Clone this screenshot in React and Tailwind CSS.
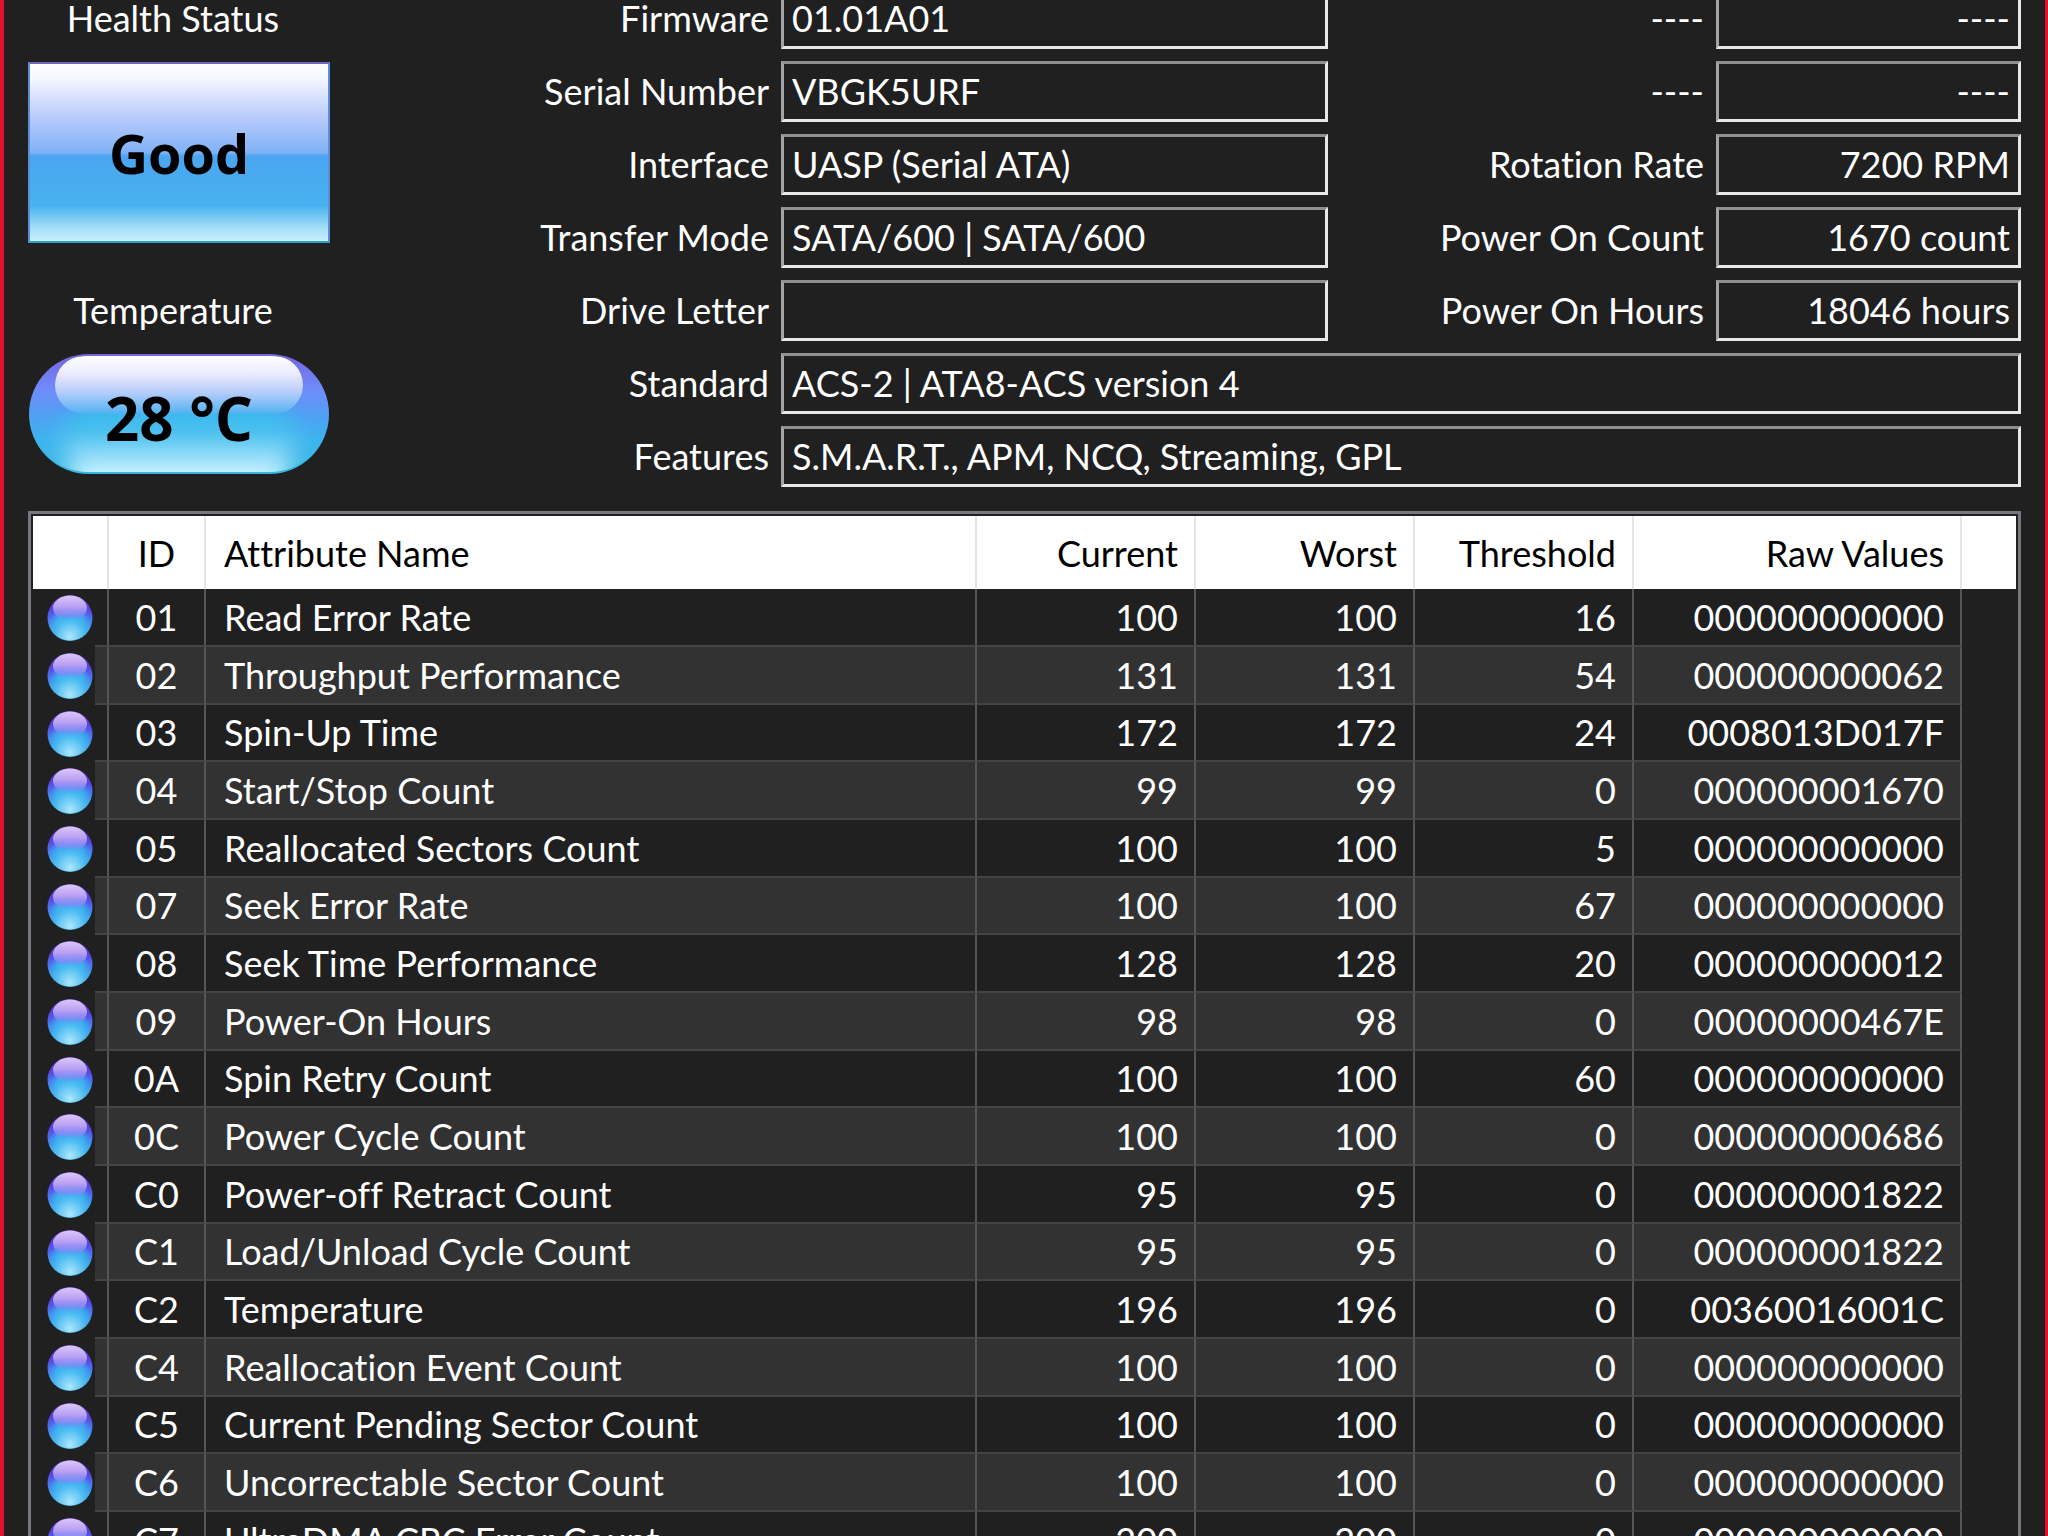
import React from "react";

const driveFields = [
  { id: "firmware", label: "Firmware", value: "01.01A01" },
  { id: "serial", label: "Serial Number", value: "VBGK5URF" },
  { id: "interface", label: "Interface", value: "UASP (Serial ATA)" },
  { id: "transfer", label: "Transfer Mode", value: "SATA/600 | SATA/600" },
  { id: "letter", label: "Drive Letter", value: "" },
];

const usageFields = [
  { id: "reserved-1", label: "----", value: "----" },
  { id: "reserved-2", label: "----", value: "----" },
  { id: "rotation", label: "Rotation Rate", value: "7200 RPM" },
  { id: "power-count", label: "Power On Count", value: "1670 count" },
  { id: "power-hours", label: "Power On Hours", value: "18046 hours" },
];

const wideFields = [
  { id: "standard", label: "Standard", value: "ACS-2 | ATA8-ACS version 4" },
  { id: "features", label: "Features", value: "S.M.A.R.T., APM, NCQ, Streaming, GPL" },
];

const attributes = [
  { id: "01", name: "Read Error Rate", current: 100, worst: 100, threshold: 16, raw: "000000000000" },
  { id: "02", name: "Throughput Performance", current: 131, worst: 131, threshold: 54, raw: "000000000062" },
  { id: "03", name: "Spin-Up Time", current: 172, worst: 172, threshold: 24, raw: "0008013D017F" },
  { id: "04", name: "Start/Stop Count", current: 99, worst: 99, threshold: 0, raw: "000000001670" },
  { id: "05", name: "Reallocated Sectors Count", current: 100, worst: 100, threshold: 5, raw: "000000000000" },
  { id: "07", name: "Seek Error Rate", current: 100, worst: 100, threshold: 67, raw: "000000000000" },
  { id: "08", name: "Seek Time Performance", current: 128, worst: 128, threshold: 20, raw: "000000000012" },
  { id: "09", name: "Power-On Hours", current: 98, worst: 98, threshold: 0, raw: "00000000467E" },
  { id: "0A", name: "Spin Retry Count", current: 100, worst: 100, threshold: 60, raw: "000000000000" },
  { id: "0C", name: "Power Cycle Count", current: 100, worst: 100, threshold: 0, raw: "000000000686" },
  { id: "C0", name: "Power-off Retract Count", current: 95, worst: 95, threshold: 0, raw: "000000001822" },
  { id: "C1", name: "Load/Unload Cycle Count", current: 95, worst: 95, threshold: 0, raw: "000000001822" },
  { id: "C2", name: "Temperature", current: 196, worst: 196, threshold: 0, raw: "00360016001C" },
  { id: "C4", name: "Reallocation Event Count", current: 100, worst: 100, threshold: 0, raw: "000000000000" },
  { id: "C5", name: "Current Pending Sector Count", current: 100, worst: 100, threshold: 0, raw: "000000000000" },
  { id: "C6", name: "Uncorrectable Sector Count", current: 100, worst: 100, threshold: 0, raw: "000000000000" },
  { id: "C7", name: "UltraDMA CRC Error Count", current: 200, worst: 200, threshold: 0, raw: "000000000000" },
];

// The first row runs into the top edge of the window, so it has no upper border
const Field = ({ id, label, value, first = false, align = "text-left", span = "" }) => (
  <>
    <label
      htmlFor={id}
      className={`pr-3 text-right whitespace-nowrap ${first ? "leading-9" : "leading-[60px]"}`}
    >
      {label}
    </label>
    <input
      id={id}
      readOnly
      value={value}
      className={`w-full min-w-0 border-[3px] border-t-[#8f8f8f] border-r-[#e8e8e8] border-b-[#e8e8e8] border-l-[#a4a4a4] bg-transparent px-2 outline-none ${
        first ? "h-[49px] border-t-0 pb-2.5 leading-9" : "h-[61px] pb-0.5"
      } ${align} ${span}`}
    />
  </>
);

// Shared gradients for the status orbs
const Gradients = () => (
  <svg width="0" height="0" className="absolute" aria-hidden="true">
    <defs>
      <linearGradient id="orb-body" x1="0" y1="0" x2="0" y2="1">
        <stop offset="0" stopColor="#5a3cc8" />
        <stop offset="0.3" stopColor="#5a42e0" />
        <stop offset="0.52" stopColor="#4a74f0" />
        <stop offset="0.75" stopColor="#3fa8ec" />
        <stop offset="1" stopColor="#3aa6d8" />
      </linearGradient>
      <linearGradient id="orb-gloss" x1="0" y1="0" x2="0" y2="1">
        <stop offset="0" stopColor="#dcc6f4" />
        <stop offset="0.45" stopColor="#b8a0f4" />
        <stop offset="0.8" stopColor="#8488f6" stopOpacity="0.8" />
        <stop offset="1" stopColor="#5c9cf6" stopOpacity="0" />
      </linearGradient>
      <radialGradient id="orb-glow" cx="0.5" cy="0.92" r="0.5">
        <stop offset="0" stopColor="#b0e8fc" />
        <stop offset="0.5" stopColor="#74cef6" stopOpacity="0.8" />
        <stop offset="1" stopColor="#3cb8ee" stopOpacity="0" />
      </radialGradient>
      <radialGradient id="orb-core" cx="0.5" cy="0.5" r="0.5">
        <stop offset="0" stopColor="#3cb8f0" />
        <stop offset="0.6" stopColor="#3cb4f0" stopOpacity="0.9" />
        <stop offset="1" stopColor="#3cb8f0" stopOpacity="0" />
      </radialGradient>
    </defs>
  </svg>
);

const StatusOrb = () => (
  <svg viewBox="0 0 46 48" className="mx-auto block h-12 w-[46px]" role="img" aria-label="Good">
    <ellipse cx="23" cy="24" rx="22.5" ry="23" fill="url(#orb-body)" />
    <ellipse cx="23" cy="28" rx="21" ry="15" fill="url(#orb-core)" />
    <ellipse cx="23" cy="24" rx="22" ry="22.5" fill="url(#orb-glow)" />
    <ellipse cx="23" cy="14" rx="17" ry="12.5" fill="url(#orb-gloss)" />
  </svg>
);

const TemperaturePill = () => (
  <svg viewBox="0 0 302 120" preserveAspectRatio="none" className="absolute inset-0 h-full w-full" aria-hidden="true">
    <defs>
      <linearGradient id="pill-body" x1="0" y1="0" x2="0" y2="1">
        <stop offset="0" stopColor="#7565e0" />
        <stop offset="0.3" stopColor="#6f8cfa" />
        <stop offset="0.5" stopColor="#529ff4" />
        <stop offset="0.72" stopColor="#3cb4ee" />
        <stop offset="1" stopColor="#35b6e0" />
      </linearGradient>
      <linearGradient id="pill-gloss" x1="0" y1="0" x2="0" y2="1">
        <stop offset="0" stopColor="#ffffff" />
        <stop offset="0.3" stopColor="#ecebfe" />
        <stop offset="0.6" stopColor="#bccffb" />
        <stop offset="1" stopColor="#50b2f2" />
      </linearGradient>
      <linearGradient id="pill-glow" x1="0" y1="0" x2="0" y2="1">
        <stop offset="0" stopColor="#35b7ee" />
        <stop offset="0.3" stopColor="#4bc0ef" />
        <stop offset="0.8" stopColor="#c6f2ff" />
      </linearGradient>
      <filter id="pill-soft" x="-20%" y="-20%" width="140%" height="140%">
        <feGaussianBlur stdDeviation="13 4" />
      </filter>
      <clipPath id="pill-clip">
        <rect x="2" y="2" width="298" height="116" rx="58" />
      </clipPath>
    </defs>
    <rect x="1" width="300" height="120" rx="60" fill="url(#pill-body)" />
    <g clipPath="url(#pill-clip)">
      <path d="M64 54H238C262 54 270 70 266 88L256 136H46L36 88C32 70 40 54 64 54Z" fill="url(#pill-glow)" filter="url(#pill-soft)" />
      <rect x="27" y="2" width="248" height="58" rx="29" fill="url(#pill-gloss)" />
    </g>
  </svg>
);

const AttributeTable = () => {
  const head = "border-r-2 border-[#e5e5e5] font-normal";
  const cell = "border-r-2 border-b-2 border-r-[#555555] border-b-[#444444]";

  return (
    <div className="mt-6 border-[3px] border-[#75787e] p-0.5">
      <table className="w-full table-fixed border-separate border-spacing-0">
        <colgroup>
          <col className="w-[62px]" />
          <col className="w-[14px]" />
          <col className="w-[97px]" />
          <col />
          <col className="w-[219px]" />
          <col className="w-[219px]" />
          <col className="w-[219px]" />
          <col className="w-[328px]" />
          <col className="w-[54px]" />
        </colgroup>
        <thead className="bg-white text-black">
          <tr className="h-[73px]">
            <th colSpan={2} aria-label="Status" className={head}></th>
            <th className={`${head} text-center`}>ID</th>
            <th className={`${head} pl-[18px] text-left`}>Attribute Name</th>
            <th className={`${head} pr-4 text-right`}>Current</th>
            <th className={`${head} pr-4 text-right`}>Worst</th>
            <th className={`${head} pr-4 text-right`}>Threshold</th>
            <th className={`${head} pr-4 text-right`}>Raw Values</th>
            <th></th>
          </tr>
        </thead>
        <tbody className="leading-[55px]">
          {attributes.map((attr, index) => {
            const stripe = index % 2 === 1 ? "bg-[#323232]" : "bg-[#202020]";
            return (
              <tr key={attr.id} className="h-[58px] nth-[3n]:h-[57px]">
                <td className="pl-3">
                  <StatusOrb />
                </td>
                <td className={`${cell} ${stripe}`}></td>
                <td className={`${cell} ${stripe} text-center`}>{attr.id}</td>
                <td className={`${cell} ${stripe} pl-[18px]`}>{attr.name}</td>
                <td className={`${cell} ${stripe} pr-4 text-right`}>{attr.current}</td>
                <td className={`${cell} ${stripe} pr-4 text-right`}>{attr.worst}</td>
                <td className={`${cell} ${stripe} pr-4 text-right`}>{attr.threshold}</td>
                <td className={`${cell} ${stripe} pr-4 text-right`}>{attr.raw}</td>
                <td></td>
              </tr>
            );
          })}
        </tbody>
      </table>
    </div>
  );
};

function App() {
  return (
    <div className="h-screen overflow-hidden border-r-[3px] border-l-4 border-[#e3122c] bg-[#202020] px-6 font-['Lato','Noto_Sans',sans-serif] text-[36px] text-white [font-variant-ligatures:none]">
      <Gradients />
      <div className="flex">
        <div className="flex w-[302px] shrink-0 flex-col">
          <div className="pr-3 text-center leading-9">Health Status</div>
          <button
            type="button"
            className="mt-[26px] h-[181px] border-2 border-t-[#6f68b8] border-r-[#5a8fd8] border-b-[#2f9ec8] border-l-[#5a8fd8] bg-[linear-gradient(to_bottom,#ffffff_0%,#f6f7ff_8%,#b9cbfb_30%,#80b2f7_50%,#4ba5f0_52%,#48b2ef_80%,#a0dcf7_92%,#c8f0fc_100%)] font-['Open_Sans','Noto_Sans',sans-serif] text-[54px] leading-none font-bold text-black"
          >
            Good
          </button>
          <div className="mt-[37px] pr-3 text-center leading-[60px]">Temperature</div>
          <button
            type="button"
            className="relative mt-3.5 h-[120px] pt-2 font-['Open_Sans','Noto_Sans',sans-serif] text-[60px] leading-none font-bold text-black"
          >
            <TemperaturePill />
            <span className="relative">28 °C</span>
          </button>
        </div>

        <div className="grid flex-1 grid-cols-[451px_1fr_388px_305px] gap-y-3">
          {driveFields.map((field, index) => (
            <React.Fragment key={field.id}>
              <Field {...field} first={index === 0} />
              <Field {...usageFields[index]} first={index === 0} align="text-right" />
            </React.Fragment>
          ))}
          {wideFields.map((field) => (
            <Field key={field.id} {...field} span="col-span-3" />
          ))}
        </div>
      </div>

      <AttributeTable />
    </div>
  );
}

export default App;
